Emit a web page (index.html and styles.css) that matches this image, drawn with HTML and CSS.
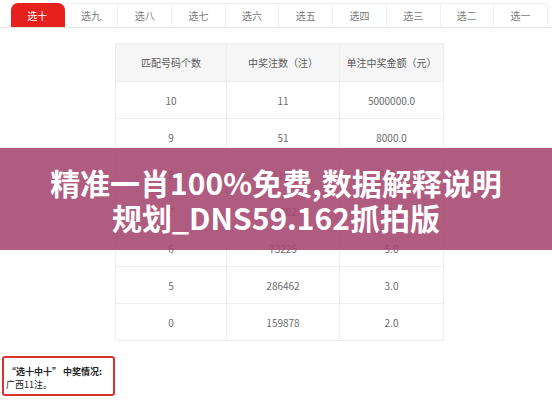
FILE: index.html
```html
<!DOCTYPE html>
<html lang="zh-CN">
<head>
<meta charset="utf-8">
<link rel="stylesheet" href="styles.css">
</head>
<body>
<div class="page">
  <div class="tabbar">
    <div class="tab active">选十</div>
    <div class="tab">选九</div>
    <div class="tab">选八</div>
    <div class="tab">选七</div>
    <div class="tab">选六</div>
    <div class="tab">选五</div>
    <div class="tab">选四</div>
    <div class="tab">选三</div>
    <div class="tab">选二</div>
    <div class="tab">选一</div>
  </div>
  <table class="prize">
    <thead>
      <tr><th>匹配号码个数</th><th>中奖注数（注）</th><th>单注中奖金额（元）</th></tr>
    </thead>
    <tbody>
      <tr><td>10</td><td>11</td><td>5000000.0</td></tr>
      <tr><td>9</td><td>51</td><td>8000.0</td></tr>
      <tr><td>8</td><td>1162</td><td>800.0</td></tr>
      <tr><td>7</td><td>11302</td><td>80.0</td></tr>
      <tr><td>6</td><td>73225</td><td>5.0</td></tr>
      <tr><td>5</td><td>286462</td><td>3.0</td></tr>
      <tr><td>0</td><td>159878</td><td>2.0</td></tr>
    </tbody>
  </table>
  <div class="note">
    <div class="note-title">“选十中十” 中奖情况:</div>
    <div class="note-body">广西11注。</div>
  </div>
  <div class="banner">
    <div class="banner-text">精准一肖100%免费,数据解释说明<br>规划_DNS59.162抓拍版</div>
  </div>
</div>
</body>
</html>
```
FILE: styles.css
```css
html, body {
  margin: 0;
  padding: 0;
  background: #ffffff;
}
.page {
  position: relative;
  width: 552px;
  height: 400px;
  overflow: hidden;
  font-family: "Noto Sans CJK SC", "Noto Sans", sans-serif;
}
.tabbar {
  display: flex;
  padding: 3px 0 0 11px;
  border-bottom: 1px solid #e6e6e6;
  height: 24px;
}
.tab {
  width: 53.7px;
  flex: none;
  box-sizing: border-box;
  height: 24px;
  line-height: 23px;
  text-align: center;
  font-size: 10px;
  color: #7a7a7a;
  border-top: 1px solid #f0f0f0;
  border-right: 1px solid #f0f0f0;
}
.tab.active {
  background: #e6211d;
  color: #ffffff;
  border-color: #e6211d;
  border-radius: 7px 7px 0 0;
}
.prize {
  margin: 15px 0 0 115px;
  border-collapse: collapse;
  width: 329px;
  font-size: 10px;
  color: #6a6a6a;
}
.prize th, .prize td {
  border: 1px solid #eeeeee;
  text-align: center;
  font-weight: normal;
  padding: 0;
}
.prize th {
  background: #f6f6f6;
  height: 37px;
  color: #5a5a5a;
}
.prize th:nth-child(1), .prize td:nth-child(1) { width: 110px; }
.prize th:nth-child(2), .prize td:nth-child(2) { width: 112px; }
.prize td {
  height: 36px;
}
.note {
  margin: 15px 0 0 2px;
  width: 113px;
  height: 40px;
  box-sizing: border-box;
  border: 2px solid #d8322c;
  border-radius: 3px;
  padding: 7px 0 0 2px;
  font-size: 9px;
  line-height: 13px;
  color: #222;
  white-space: nowrap;
}
.note-title {
  font-weight: bold;
  padding-left: 1px;
}
.banner {
  position: absolute;
  left: 0;
  top: 148px;
  width: 552px;
  height: 102px;
  background: rgba(165, 70, 111, 0.88);
  display: flex;
  align-items: center;
  justify-content: center;
}
.banner-text {
  color: #ffffff;
  font-weight: bold;
  font-size: 30px;
  line-height: 35px;
  text-align: center;
  padding-top: 2px;
}
```
